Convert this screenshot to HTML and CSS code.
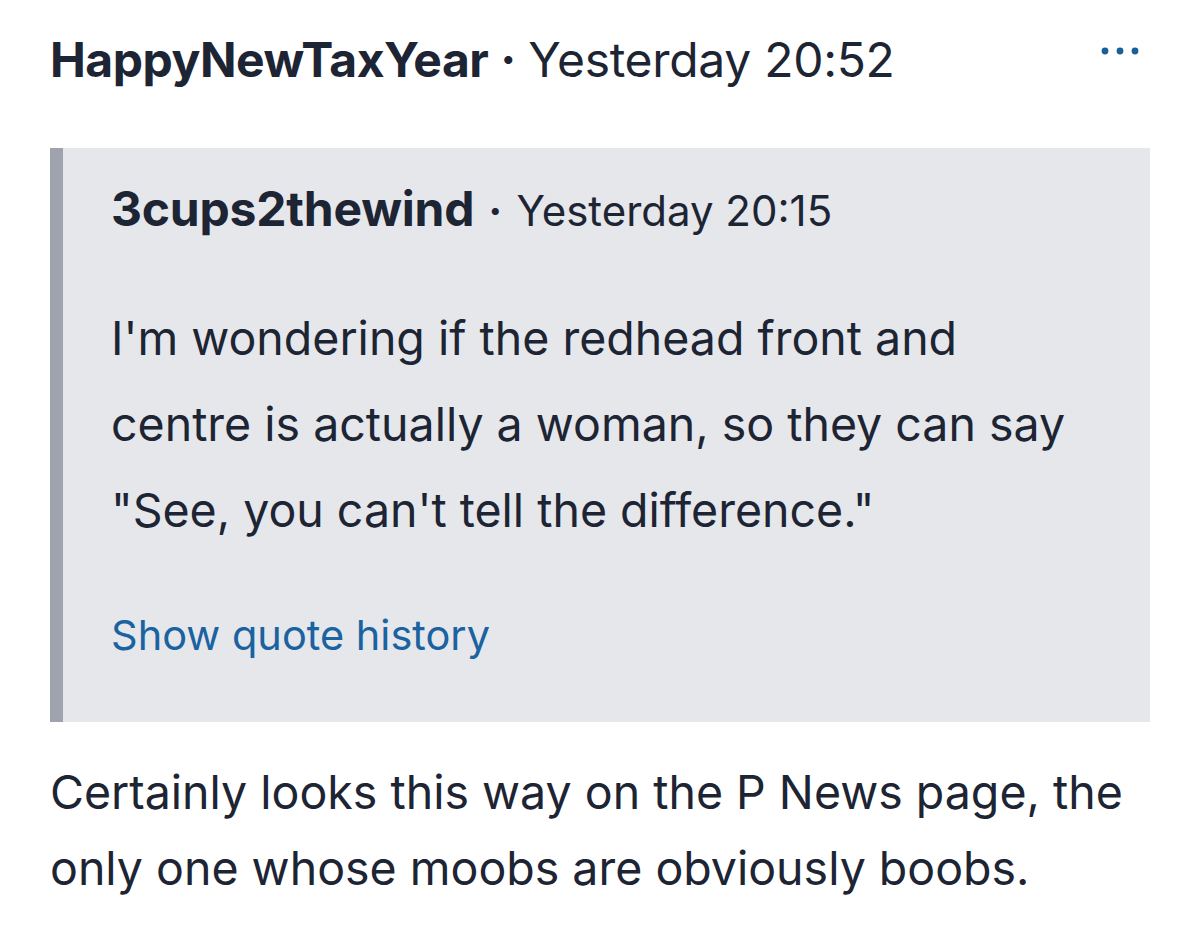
FILE: index.html
```html
<!DOCTYPE html>
<html>
<head>
    <title>Comment</title>
    <link rel="stylesheet" href="styles.css">
</head>
<body>
    <div class="post">
        <div class="post-header">
            <span class="author">HappyNewTaxYear</span>
            <span class="sep">&middot;</span>
            <span class="time">Yesterday 20:52</span>
            <span class="more">
                <svg width="44" height="12" viewBox="0 0 44 12">
                    <circle cx="7" cy="6" r="3.4" fill="#1a5e98"/>
                    <circle cx="22" cy="6" r="3.4" fill="#1a5e98"/>
                    <circle cx="37" cy="6" r="3.4" fill="#1a5e98"/>
                </svg>
            </span>
        </div>

        <div class="quote">
            <div class="quote-header">
                <span class="quote-author">3cups2thewind</span>
                <span class="quote-sep">&middot;</span>
                <span class="quote-time">Yesterday 20:15</span>
            </div>
            <p class="quote-text">I'm wondering if the redhead front and centre is actually a woman, so they can say "See, you can't tell the difference."</p>
            <a class="quote-history" href="#">Show quote history</a>
        </div>

        <p class="post-text">Certainly looks this way on the P News page, the only one whose moobs are obviously boobs.</p>
    </div>
</body>
</html>
```

FILE: styles.css
```css
body {
    margin: 0;
    background-color: #ffffff;
    font-family: Inter, "Noto Sans", sans-serif;
    color: #1d2433;
}

.post {
    padding: 28px 50px 0 50px;
}

.post-header {
    display: flex;
    align-items: baseline;
    font-size: 48px;
    line-height: 64px;
}

.author {
    font-weight: 700;
    letter-spacing: -0.5px;
}

.sep {
    margin: 0 12px;
    font-weight: 700;
}

.time {
    font-weight: 400;
    letter-spacing: -0.3px;
}

.more {
    margin-left: auto;
    margin-right: 8px;
    align-self: center;
    position: relative;
    top: -20px;
}

.quote {
    margin-top: 56px;
    background-color: #e5e7eb;
    border-left: 13px solid #9ea3ae;
    padding: 35px 66px 59px 48px;
}

.quote-header {
    display: flex;
    align-items: baseline;
    line-height: 52px;
}

.quote-author {
    font-size: 48px;
    font-weight: 700;
    letter-spacing: -0.2px;
}

.quote-sep {
    font-size: 42px;
    font-weight: 700;
    margin: 0 14px;
}

.quote-time {
    font-size: 42px;
}

.quote-text {
    margin: 58px 0 0 0;
    font-size: 46.5px;
    line-height: 86px;
}

.quote-history {
    display: inline-block;
    margin-top: 54px;
    font-size: 41.5px;
    line-height: 56px;
    color: #1a62a0;
    text-decoration: none;
}

.post-text {
    margin: 32px 0 0 0;
    font-size: 46.5px;
    line-height: 76px;
}
```
